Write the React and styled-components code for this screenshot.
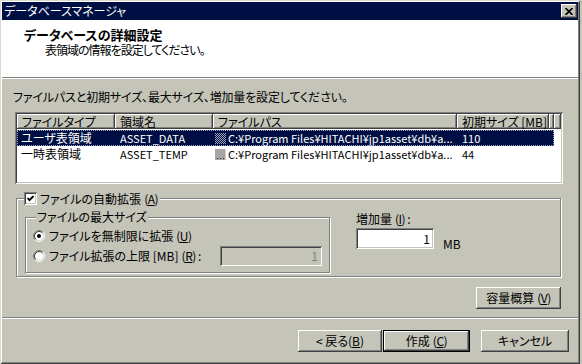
import React from "react";
import styled, { createGlobalStyle } from "styled-components";

const face = "#c5c4b8";
const shadow = "#808080";
const dark = "#404040";
const navy = "#000f43";

const GlobalStyle = createGlobalStyle`
  html, body {
    margin: 0;
    padding: 0;
    background: ${face};
  }
  body {
    font-family: "Noto Sans CJK JP", "Liberation Sans", sans-serif;
    font-size: 12px;
    color: #000;
    font-feature-settings: "palt";
  }
  u {
    text-decoration-thickness: 1px;
    text-underline-offset: 1px;
  }
`;

const raised = `
  box-shadow: inset -1px -1px ${dark}, inset 1px 1px #fff,
    inset -2px -2px ${shadow}, inset 2px 2px ${face};
`;
const sunken = `
  box-shadow: inset 1px 1px ${shadow}, inset -1px -1px #fff,
    inset 2px 2px ${dark}, inset -2px -2px ${face};
`;

const Window = styled.div`
  box-sizing: border-box;
  width: 580px;
  height: 364px;
  padding: 2px;
  background: ${face};
  display: flex;
  flex-direction: column;
  box-shadow: inset 1px 1px #dcdad0, inset -1px -1px ${dark},
    inset 2px 2px #fff, inset -2px -2px ${shadow};
`;

const TitleBar = styled.div`
  height: 18px;
  flex: none;
  background: ${navy};
  color: #fff;
  display: flex;
  align-items: center;
  justify-content: space-between;
  padding: 0 1px 0 2px;
  line-height: 18px;
`;

const CloseButton = styled.div`
  width: 16px;
  height: 14px;
  background: ${face};
  ${raised};
  display: flex;
  align-items: center;
  justify-content: center;
`;

const Header = styled.div`
  flex: none;
  height: 58px;
  background: #fff;
  border-bottom: 1px solid ${shadow};
  box-shadow: 0 1px 0 #fff;
  padding: 7px 0 0 22px;
  box-sizing: border-box;
`;

const HeaderTitle = styled.div`
  font-weight: 700;
  font-size: 13px;
  line-height: 15px;
`;

const HeaderSub = styled.div`
  margin-top: 1px;
  line-height: 14px;
  padding-left: 21px;
  letter-spacing: -1px;
`;

const Body = styled.div`
  flex: none;
  height: 238px;
  margin-top: 1px;
  box-sizing: border-box;
  padding: 11px 15px 0 11px;
  display: flex;
  flex-direction: column;
`;

const Instruction = styled.div`
  line-height: 14px;
  letter-spacing: -0.15px;
`;

const List = styled.div`
  margin: 8px 0 0 2px;
  height: 72px;
  box-sizing: border-box;
  padding: 2px;
  background: #fff;
  ${sunken};
  overflow: hidden;
`;

const HeaderRow = styled.div`
  display: flex;
  height: 15px;
`;

const HeaderCell = styled.div`
  box-sizing: border-box;
  width: ${(p) => p.$w}px;
  flex: ${(p) => (p.$w ? "none" : "1")};
  padding-left: 5px;
  background: ${face};
  line-height: 15px;
  white-space: nowrap;
  overflow: hidden;
  ${raised};
`;

const Row = styled.div`
  display: flex;
  width: 537px;
  height: 16px;
  margin-top: ${(p) => (p.$first ? "1px" : "0")};
  line-height: 16px;
  background: ${(p) => (p.$selected ? navy : "transparent")};
  color: ${(p) => (p.$selected ? "#fff" : "#000")};
  outline: ${(p) => (p.$selected ? "1px dotted #9aa4c8" : "none")};
  outline-offset: -1px;
`;

const Cell = styled.div`
  box-sizing: border-box;
  width: ${(p) => p.$w}px;
  flex: none;
  padding-left: ${(p) => p.$pad ?? 5}px;
  font-size: ${(p) => (p.$latin ? "11px" : "12px")};
  white-space: nowrap;
  overflow: hidden;
  display: flex;
  align-items: center;
  gap: 2px;
`;

const OuterGroup = styled.fieldset`
  margin: 7px 2px 0 3px;
  padding: 0 0 3px 0;
  border: 1px solid ${shadow};
  box-shadow: inset 1px 1px #fff, 1px 1px 0 #fff;
  display: flex;
  align-items: flex-start;
  min-width: 0;
`;

const OuterLegend = styled.legend`
  margin-left: 7px;
  padding: 0 2px 0 0;
  background: ${face};
  line-height: 15px;
  display: flex;
  align-items: center;
  gap: 3px;
`;

const InnerGroup = styled.fieldset`
  margin: 4px 0 0 8px;
  width: 305px;
  box-sizing: border-box;
  padding: 2px 7px 6px 7px;
  border: 1px solid ${shadow};
  box-shadow: inset 1px 1px #fff, 1px 1px 0 #fff;
  min-width: 0;
`;

const InnerLegend = styled.legend`
  margin-left: 3px;
  padding: 0 1px;
  background: ${face};
  line-height: 14px;
`;

const OptionRow = styled.div`
  display: flex;
  align-items: center;
  height: 20px;
  justify-content: space-between;
`;

const Option = styled.label`
  display: flex;
  align-items: center;
  gap: 4px;
  line-height: 14px;
`;

const Field = styled.div`
  box-sizing: border-box;
  width: ${(p) => p.$w}px;
  height: ${(p) => p.$h}px;
  padding: 0 4px;
  text-align: right;
  line-height: ${(p) => p.$h}px;
  background: ${(p) => (p.$disabled ? face : "#fff")};
  color: ${(p) => (p.$disabled ? shadow : "#000")};
  ${sunken};
`;

const Increment = styled.div`
  margin-left: 26px;
  padding-top: 6px;
  display: flex;
  flex-direction: column;
`;

const Label = styled.div`
  line-height: 14px;
`;

const IncrementRow = styled.div`
  margin-top: 2px;
  display: flex;
  align-items: flex-end;
  gap: 9px;
`;

const Unit = styled.span`
  line-height: 14px;
  margin-bottom: -2px;
`;

const KeyText = styled.span`
  letter-spacing: -0.5px;
  margin-left: 3px;
`;

const Key = ({ k, colon }) => (
  <KeyText>
    (<u>{k}</u>){colon ? " :" : ""}
  </KeyText>
);

const ButtonRow = styled.div`
  display: flex;
  justify-content: flex-end;
  padding-right: ${(p) => p.$right ?? 0}px;
  margin-top: ${(p) => p.$top ?? 0}px;
`;

const Button = styled.div`
  box-sizing: border-box;
  width: ${(p) => p.$w}px;
  height: 22px;
  margin-left: ${(p) => p.$gap ?? 0}px;
  background: ${face};
  display: flex;
  align-items: center;
  justify-content: center;
  line-height: 14px;
  ${(p) =>
    p.$default
      ? `border: 1px solid #000; ${raised}`
      : raised}
`;

const Footer = styled.div`
  flex: 1;
  border-top: 1px solid ${shadow};
  box-shadow: inset 0 1px 0 #fff;
  padding-top: 12px;
`;

const CheckBox = () => (
  <svg width="13" height="13" viewBox="0 0 13 13">
    <rect x="0" y="0" width="13" height="13" fill={shadow} />
    <rect x="1" y="1" width="12" height="12" fill="#fff" />
    <rect x="1" y="1" width="11" height="11" fill={dark} />
    <rect x="2" y="2" width="10" height="10" fill={face} />
    <rect x="2" y="2" width="9" height="9" fill="#fff" />
    <path d="M3.5 6 L5.5 8.2 L9.6 4" fill="none" stroke="#000" strokeWidth="1.8" />
  </svg>
);

const Radio = ({ checked }) => (
  <svg width="12" height="12" viewBox="0 0 12 12">
    <circle cx="6" cy="6" r="4.2" fill="#fff" />
    <path d="M2.11 9.89 A5.5 5.5 0 0 1 9.89 2.11" fill="none" stroke={shadow} />
    <path d="M9.89 2.11 A5.5 5.5 0 0 1 2.11 9.89" fill="none" stroke="#fff" />
    <path d="M2.82 9.18 A4.5 4.5 0 0 1 9.18 2.82" fill="none" stroke={dark} />
    <path d="M9.18 2.82 A4.5 4.5 0 0 1 2.82 9.18" fill="none" stroke="#dcdad0" />
    {checked && <circle cx="6" cy="6" r="2" fill="#000" />}
  </svg>
);

const FileIcon = ({ selected, id }) => (
  <svg width="11" height="11" viewBox="0 0 11 11" style={{ flex: "none" }}>
    <defs>
      <pattern id={id} width="2" height="2" patternUnits="userSpaceOnUse">
        <rect width="2" height="2" fill={navy} />
        <rect width="1" height="1" fill="#a4a4b8" />
        <rect x="1" y="1" width="1" height="1" fill="#a4a4b8" />
      </pattern>
    </defs>
    <rect width="11" height="11" fill="#a6a6a6" />
    <rect x="10" width="1" height="11" fill="#d0d0d0" />
    <rect x="2" y="9" width="1" height="1" fill="#303030" />
    <rect x="5" y="9" width="1" height="1" fill="#303030" />
    <rect x="8" y="9" width="1" height="1" fill="#303030" />
    {selected && <rect width="11" height="11" fill={`url(#${id})`} />}
  </svg>
);

const CloseGlyph = () => (
  <svg width="8" height="7" viewBox="0 0 8 7">
    <path d="M0.5 0 L7.5 7 M7.5 0 L0.5 7" stroke="#000" strokeWidth="1.6" />
  </svg>
);

const rows = [
  { type: "ユーザ表領域", name: "ASSET_DATA", size: "110", selected: true },
  { type: "一時表領域", name: "ASSET_TEMP", size: "44" },
];

const path = "C:¥Program Files¥HITACHI¥jp1asset¥db¥a...";

export default function App() {
  return (
    <>
      <GlobalStyle />
      <Window>
        <TitleBar>
          <span>データベースマネージャ</span>
          <CloseButton>
            <CloseGlyph />
          </CloseButton>
        </TitleBar>
        <Header>
          <HeaderTitle>データベースの詳細設定</HeaderTitle>
          <HeaderSub>表領域の情報を設定してください。</HeaderSub>
        </Header>
        <Body>
          <Instruction>ファイルパスと初期サイズ、最大サイズ、増加量を設定してください。</Instruction>
          <List>
            <HeaderRow>
              <HeaderCell $w={98}>ファイルタイプ</HeaderCell>
              <HeaderCell $w={98}>領域名</HeaderCell>
              <HeaderCell $w={244}>ファイルパス</HeaderCell>
              <HeaderCell $w={92}>初期サイズ [MB]</HeaderCell>
              <HeaderCell $w={5} />
              <HeaderCell />
            </HeaderRow>
            {rows.map((r, i) => (
              <Row key={r.name} $selected={r.selected} $first={i === 0}>
                <Cell $w={98} $pad={4}>{r.type}</Cell>
                <Cell $w={98} $latin>{r.name}</Cell>
                <Cell $w={244} $pad={2} $latin>
                  <FileIcon selected={r.selected} id={`dith${i}`} />
                  {path}
                </Cell>
                <Cell $w={97} $latin>{r.size}</Cell>
              </Row>
            ))}
          </List>
          <OuterGroup>
            <OuterLegend>
              <CheckBox />
              <span>
                ファイルの自動拡張<Key k="A" />
              </span>
            </OuterLegend>
            <InnerGroup>
              <InnerLegend>ファイルの最大サイズ</InnerLegend>
              <OptionRow>
                <Option>
                  <Radio checked />
                  <span>
                    ファイルを無制限に拡張<Key k="U" />
                  </span>
                </Option>
              </OptionRow>
              <OptionRow>
                <Option>
                  <Radio />
                  <span>
                    ファイル拡張の上限 [MB]<Key k="R" colon />
                  </span>
                </Option>
                <Field $w={102} $h={20} $disabled>
                  1
                </Field>
              </OptionRow>
            </InnerGroup>
            <Increment>
              <Label>
                増加量<Key k="I" colon />
              </Label>
              <IncrementRow>
                <Field $w={78} $h={21}>
                  1
                </Field>
                <Unit>MB</Unit>
              </IncrementRow>
            </Increment>
          </OuterGroup>
          <ButtonRow $top={10} $right={2}>
            <Button $w={85}>
              容量概算<Key k="V" />
            </Button>
          </ButtonRow>
        </Body>
        <Footer>
          <ButtonRow $right={9}>
            <Button $w={84}>
              &lt; 戻る(<u>B</u>)
            </Button>
            <Button $w={87} $gap={1} $default>
              作成<Key k="C" />
            </Button>
            <Button $w={88} $gap={11}>
              キャンセル
            </Button>
          </ButtonRow>
        </Footer>
      </Window>
    </>
  );
}
